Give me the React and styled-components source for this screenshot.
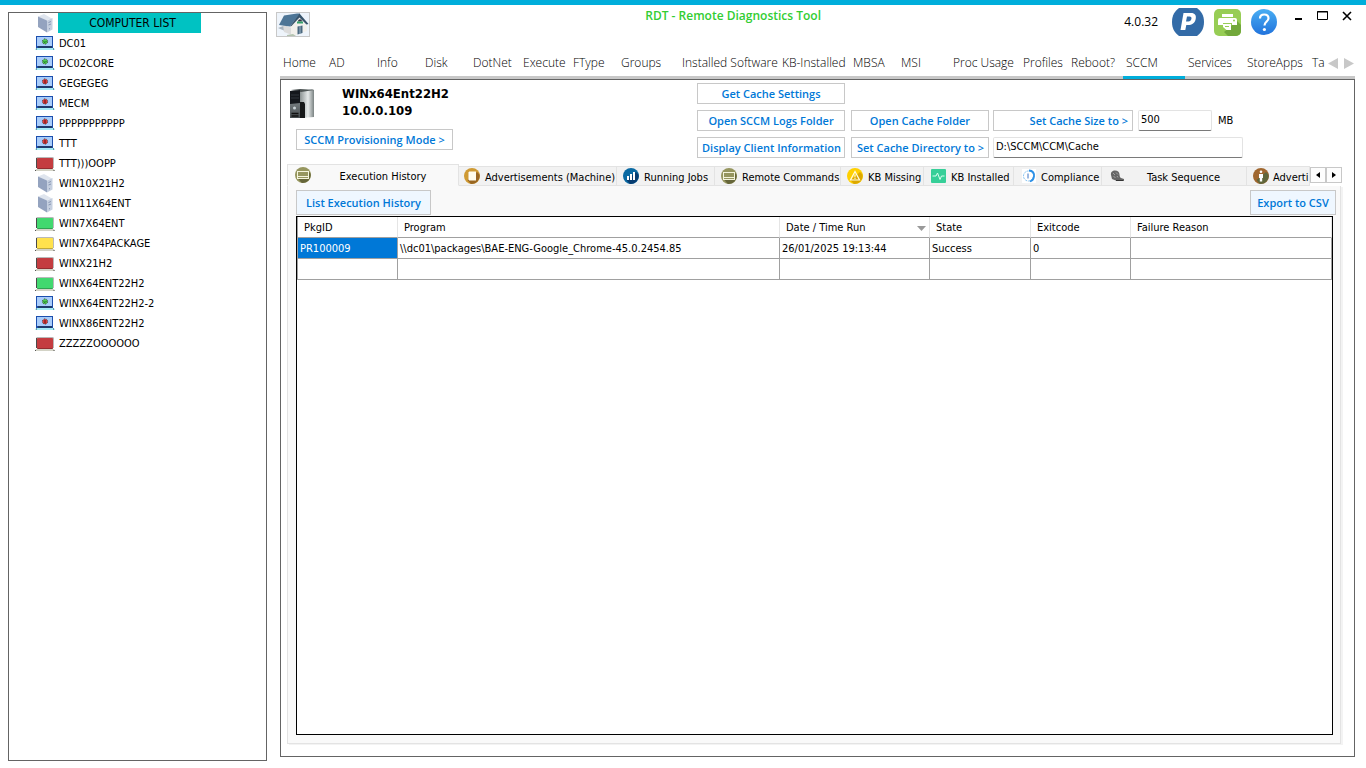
import React from "react";
import styled, { createGlobalStyle } from "styled-components";

const ui = '"DejaVu Sans Condensed", "Noto Sans", sans-serif';
const segoe = '"Open Sans", "Noto Sans", sans-serif';
const line = "#646464";
const accent = "#00aedb";

const GlobalStyle = createGlobalStyle`
  *, *::before, *::after { box-sizing: border-box; }
  html, body, #root { margin: 0; min-height: 100vh; }
  body { background: #fff; color: #000; font-family: ${ui}; font-size: 11px; }
  button, input { font-family: inherit; margin: 0; }
`;

const Window = styled.div`
  min-height: 100vh;
  display: flex;
  flex-direction: column;
  border-top: 5px solid ${accent};
`;

const Body = styled.div`
  flex: 1;
  display: flex;
  gap: 9px;
  padding: 0 11px 0 8px;
`;

const Sidebar = styled.aside`
  flex: 0 0 259px;
  margin: 7px 0;
  border: 1px solid ${line};
  padding-left: 26px;
`;

const SidebarHead = styled.div`
  display: flex;
  height: 20px;
  gap: 3px;
  padding-left: 1px;
`;

const SidebarTitle = styled.h2`
  margin: 0;
  width: 143px;
  padding-left: 6px;
  background: #00c2c2;
  font: 400 12px/20px ${ui};
  text-align: center;
`;

const List = styled.ul`
  list-style: none;
  margin: 0;
  padding: 0;
`;

const ListItem = styled.li`
  display: flex;
  align-items: center;
  gap: 4px;
  height: 20px;
  white-space: nowrap;
`;

const ListIcon = styled.span`
  flex: 0 0 20px;
  display: flex;
  justify-content: center;
`;

const Main = styled.main`
  flex: 1;
  min-width: 0;
  display: flex;
  flex-direction: column;
  padding-bottom: 11px;
`;

const Header = styled.header`
  display: flex;
  align-items: flex-start;
  height: 45px;
  padding-top: 3px;
`;

const HomeButton = styled.button`
  width: 34px;
  height: 25px;
  margin-top: 4px;
  padding: 0;
  border: 1px solid #c8c8c8;
  background: #eef4fb;
  display: grid;
  place-items: center;
`;

const Title = styled.h1`
  flex: 1;
  margin: 0;
  padding-left: 32px;
  text-align: center;
  color: #32cd32;
  font: 600 12px/16px ${segoe};
`;

const Tools = styled.div`
  display: flex;
  align-items: center;
  gap: 10px;
`;

const Version = styled.span`
  margin-right: 4px;
  font: 400 12px/28px ${segoe};
`;

const IconButton = styled.button`
  border: 0;
  background: none;
  padding: 0;
  display: block;
  height: ${(p) => p.$h || 28}px;
  svg { display: block; }
`;

const WindowControls = styled.div`
  display: flex;
  align-items: flex-start;
  gap: 14px;
  height: 28px;
  margin-left: 6px;
  padding-right: 3px;
`;

const Nav = styled.nav`
  display: flex;
  margin-left: 4px;
  height: 29px;
  border-bottom: 3px solid #c8c8c8;
`;

const NavTabs = styled.div`
  flex: 1;
  min-width: 0;
  display: flex;
  overflow: hidden;
  height: 29px;
  margin-right: 3px;
`;

const NavTab = styled.a`
  flex: 0 0 ${(p) => p.$w}px;
  height: 29px;
  padding: 1px 0 0 3px;
  border-bottom: 3px solid ${(p) => (p.$active ? accent : "#c8c8c8")};
  color: #000;
  font: 300 12px/24px ${segoe};
  text-decoration: none;
  white-space: nowrap;
`;

const NavArrows = styled.div`
  display: flex;
  align-items: center;
  gap: 6px;
  height: 26px;
  padding-right: 1px;
`;

const Panel = styled.section`
  flex: 1;
  display: flex;
  flex-direction: column;
  margin-left: 4px;
  border: 1px solid ${line};
  padding: 3px 12px 12px 6px;
`;

const Summary = styled.div`
  display: flex;
  height: 81px;
`;

const Machine = styled.div`
  flex: 0 0 410px;
  padding: 5px 0 0 2px;
`;

const MachineId = styled.div`
  display: flex;
  gap: 27px;
  height: 41px;
`;

const MachineName = styled.div`
  margin-top: -3px;
  font: 700 13px/17px ${ui};
`;

const Button = styled.button`
  height: ${(p) => p.$h || 21}px;
  width: ${(p) => (p.$w ? `${p.$w}px` : "auto")};
  padding: 0 4px;
  border: 1px solid #c8c8c8;
  background: ${(p) => (p.$tint ? "#eff7ff" : "#fff")};
  color: #0078d7;
  font: 600 11px/18px ${segoe};
  text-align: ${(p) => p.$align || "center"};
  white-space: nowrap;
`;

const Provisioning = styled(Button)`
  margin-left: 7px;
`;

const Actions = styled.div`
  display: grid;
  grid-template-columns: 148px 138px auto;
  grid-auto-rows: 21px;
  gap: 6px;
  align-content: start;
`;

const Pair = styled.div`
  display: flex;
  align-items: center;
  gap: 5px;
  margin-left: -2px;
`;

const TextBox = styled.input`
  width: ${(p) => p.$w}px;
  height: 21px;
  padding: 0 2px 2px;
  border: 1px solid #e3e3e3;
  border-bottom-color: #7a7a7a;
  border-radius: 2px;
  color: #000;
  font-size: 11px;
`;

const Unit = styled.label`
  margin-left: 1px;
`;

const TabStrip = styled.div`
  display: flex;
  align-items: flex-end;
  height: 22px;
`;

const TabClip = styled.div`
  flex: 1;
  min-width: 0;
  display: flex;
  align-items: flex-end;
  overflow: hidden;
`;

const Tab = styled.button`
  flex: 0 0 ${(p) => p.$w}px;
  display: flex;
  align-items: center;
  height: ${(p) => (p.$active ? 22 : 20)}px;
  padding: 0 0 0 ${(p) => p.$pad || 6}px;
  border: 1px solid #e3e3e3;
  border-left-width: ${(p) => (p.$active ? 1 : 0)}px;
  border-bottom-color: ${(p) => (p.$active ? "#f9f9f9" : "#e3e3e3")};
  background: ${(p) => (p.$active ? "#f9f9f9" : "#f2f2f2")};
  color: #000;
  font-size: 11px;
  white-space: nowrap;
  svg { flex: none; }
`;

const TabLabel = styled.span`
  flex: 1;
  margin-left: ${(p) => p.$gap || 5}px;
  padding: ${(p) => (p.$center ? "2px 8px 0 0" : "2px 0 0")};
  text-align: ${(p) => (p.$center ? "center" : "left")};
`;

const Spinner = styled.div`
  display: flex;
  height: 22px;
  padding-top: 3px;
`;

const SpinButton = styled.button`
  width: 16px;
  height: 16px;
  padding: 0;
  border: 1px solid #c8c8c8;
  background: #fdfdfd;
  display: grid;
  place-items: center;
`;

const TabPage = styled.div`
  flex: 1;
  display: flex;
  flex-direction: column;
  margin-right: 1px;
  padding: 4px 7px 8px 8px;
  border: 1px solid #e3e3e3;
  border-top: 0;
  background: #f9f9f9;
  box-shadow: 2px 1px 0 #f3f3f3;
`;

const PageBar = styled.div`
  display: flex;
  justify-content: space-between;
  height: 26px;
  margin-right: -3px;
`;

const Grid = styled.div`
  flex: 1;
  border: 1px solid #000;
  background: #fff;
`;

const Table = styled.table`
  width: 100%;
  table-layout: fixed;
  border-collapse: separate;
  border-spacing: 0;
  border-left: 1px solid #a0a0a0;
  font-size: 11px;
`;

const Th = styled.th`
  width: ${(p) => (p.$w ? `${p.$w}px` : "auto")};
  height: 21px;
  padding: 2px 0 0 6px;
  border-right: 1px solid #e5e5e5;
  border-bottom: 1px solid #a0a0a0;
  font-weight: 400;
  line-height: 14px;
  text-align: left;
`;

const ThInner = styled.div`
  display: flex;
  align-items: center;
  justify-content: space-between;
  padding-right: 3px;
`;

const Td = styled.td`
  height: 21px;
  padding: 2px 0 0 2px;
  border-right: 1px solid #a0a0a0;
  border-bottom: 1px solid #a0a0a0;
  background: ${(p) => (p.$selected ? "#0078d7" : "#fff")};
  color: ${(p) => (p.$selected ? "#fff" : "#000")};
  line-height: 14px;
  white-space: nowrap;
`;

/* Icons */

const ServerIcon = () => (
  <svg width="19" height="20" viewBox="0 0 19 20" aria-hidden="true">
    <path d="M2 3.500 8 1l8 4.500-6 2z" fill="#dfe5ee" />
    <path d="M2 3.500 11 7.500v12L2 14z" fill="#94a3bf" />
    <path d="M11 7.500 16.500 5v11.500L11 19.500z" fill="#c5cfdf" />
    <path d="M12.500 9.500l2.500-1M12.500 12l2.500-1M13 16l1-.5" stroke="#8796b3" strokeWidth="1" />
  </svg>
);

const LaptopIcon = ({ dot }) => (
  <svg width="20" height="14" viewBox="0 0 20 14" aria-hidden="true">
    <path d="M1 12h18l1 2H0z" fill="#a5ecf7" />
    <rect x="1" y="0" width="17" height="12" fill="#1c4fae" />
    <rect x="2" y="1" width="15" height="9" fill="#a9cdfb" />
    <rect x="3" y="10" width="14" height="2" fill="#203c6c" />
    <circle cx="10" cy="5.500" r="2.600" fill={dot} stroke="#3f4a4a" strokeWidth="1" strokeDasharray="1.500 1.200" />
    {dot === "#e33b3b" ? (
      <path d="M10 4v3.500" stroke="#5b1717" strokeWidth="1" />
    ) : (
      <path d="M8.500 5.500l1.500 1 1.500-1.500" stroke="#1e6b22" fill="none" strokeWidth="1" />
    )}
    <path d="M1 13h1M18 13h1" stroke="#345" />
  </svg>
);

const ScreenIcon = ({ fill }) => (
  <svg width="20" height="15" viewBox="0 0 20 15" aria-hidden="true">
    <path d="M2 1h16l1 1v10H1V2z" fill="#b9b9b9" />
    <rect x="2" y="2" width="16" height="11" rx="1" fill={fill} />
    <path d="M1.500 2v10" stroke="#4a4a4a" />
    <rect x="2" y="12" width="16" height="1" fill="#000" opacity=".25" />
    <path d="M1 13h18l1 2H0z" fill="#d3d3c6" />
    <path d="M0 14.500h1M18.500 14.500h1" stroke="#555" />
  </svg>
);

const icons = {
  ok: <LaptopIcon dot="#4fd052" />,
  bad: <LaptopIcon dot="#e33b3b" />,
  red: <ScreenIcon fill="#c43c40" />,
  green: <ScreenIcon fill="#42d86f" />,
  yellow: <ScreenIcon fill="#ffe24d" />,
  server: <ServerIcon />,
};

const HouseIcon = () => (
  <svg width="32" height="23" viewBox="0 0 32 23" aria-hidden="true">
    <path d="M1 15l8-3 6 9z" fill="#a9b4be" />
    <path d="M6 12l9 3v7L7 19z" fill="#dcdcdc" />
    <path d="M14 11l9-8 7 8v7l-14 5-2-1z" fill="#f2f0ec" />
    <path d="M2 12 7 2.500 20 .5h3L13 13.500z" fill="#4d7596" />
    <path d="M13 13.500 22.500 .5 31.500 11l-2 .5-7-7-8 8.500z" fill="#38546c" />
    <path d="M20.500 13.500l5-1v7.500l-5 1.500z" fill="#4a6880" />
    <path d="M23 13v8" stroke="#9db5c6" />
    <path d="M21 8.500c0-3 4-3 4 0z" fill="#334" />
    <path d="M20 9.500h6" stroke="#35a06b" strokeWidth="2" />
    <path d="M10 22l6-1 3 2h-9z" fill="#b4c3b0" />
  </svg>
);

const TowerIcon = () => (
  <svg width="26" height="32" viewBox="0 0 26 32" aria-hidden="true">
    <defs>
      <linearGradient id="side" x1="0" x2="1">
        <stop offset="0" stopColor="#7f8787" />
        <stop offset=".6" stopColor="#e6eaea" />
        <stop offset="1" stopColor="#7a8282" />
      </linearGradient>
      <linearGradient id="front" x1="0" x2="0" y1="0" y2="1">
        <stop offset="0" stopColor="#9ba3a6" />
        <stop offset="1" stopColor="#464c4f" />
      </linearGradient>
    </defs>
    <path d="M10 2 23 1l2 1v27l-13 1z" fill="url(#side)" />
    <path d="M2 2l9-1 14 1-13 2z" fill="#4d5454" />
    <path d="M1 3l10-1v28L1 30z" fill="url(#front)" />
    <path d="M1 3l10-1v13L1 16z" fill="#14171c" />
    <path d="M11 14h4l1 2v14h-5z" fill="#161819" />
    <path d="M2 10h8M2 7h8" stroke="#30363d" />
    <circle cx="5.500" cy="20" r="1.500" fill="#c9d2d6" />
    <path d="M2.500 25.500h7M2.500 28h7" stroke="#111" strokeWidth="1.500" />
  </svg>
);

const PaypalIcon = () => (
  <svg width="32" height="28" viewBox="0 0 32 28" aria-hidden="true">
    <path d="M7 0h18c4 3 7 7 7 14s-3 11-7 14H7C3 25 0 21 0 14S3 3 7 0z" fill="#336ba7" />
    <path
      fillRule="evenodd"
      d="M11.500 5h7.500c4 0 5.500 2.500 4.700 6-.8 4-3.700 6-7.700 6h-1.700l-1 5H8.500zM15 8.500l-1 5h2.500c1.500 0 2.500-1 2.900-2.500.4-1.600-.2-2.500-1.900-2.500z"
      fill="#fff"
    />
  </svg>
);

const PrinterIcon = () => (
  <svg width="27" height="27" viewBox="0 0 27 27" aria-hidden="true">
    <rect width="27" height="27" rx="5" fill="#97cd55" />
    <path d="M23 12l4 4v6a5 5 0 0 1-5 5h-8l-4-4 7-6z" fill="#72a83b" />
    <rect x="8" y="5" width="11" height="3" fill="#fff" />
    <path d="M6 9h15a2 2 0 0 1 2 2v5h-5v-2H9v2H4v-5a2 2 0 0 1 2-2z" fill="#fff" />
    <circle cx="20" cy="11.500" r="1" fill="#97cd55" />
    <path d="M9 15h8v6h-4.500L9 18z" fill="#fff" />
    <path d="M11 17.500h4" stroke="#97cd55" />
  </svg>
);

const HelpIcon = () => (
  <svg width="27" height="27" viewBox="0 0 27 27" aria-hidden="true">
    <defs>
      <linearGradient id="help" x1="0" x2="0" y1="0" y2="1">
        <stop offset="0" stopColor="#49aef3" />
        <stop offset="1" stopColor="#2273dc" />
      </linearGradient>
    </defs>
    <circle cx="13" cy="13" r="13" fill="url(#help)" />
    <path d="M9 9.500c0-2.500 1.700-4 4.200-4s4.300 1.400 4.300 3.700c0 3.300-4 3.300-4 7.300" fill="none" stroke="#fff" strokeWidth="2.200" />
    <circle cx="13.400" cy="20.500" r="1.600" fill="#fff" />
  </svg>
);

const Disc = ({ fill, shade, children }) => (
  <svg width="16" height="16" viewBox="0 0 16 16" aria-hidden="true">
    <circle cx="8" cy="8" r="8" fill={fill} />
    <path d="M13 4l2.500 2.500a8 8 0 0 1-9 9.300L3.500 12z" fill={shade} />
    {children}
  </svg>
);

const CardIcon = () => (
  <Disc fill="#96965f" shade="#66663a">
    <rect x="2.500" y="4.500" width="11" height="7" fill="#96965f" stroke="#f4f4dc" />
    <path d="M3 9.500h10" stroke="#f4f4dc" />
  </Disc>
);

const BookIcon = () => (
  <Disc fill="#cf9a33" shade="#996622">
    <rect x="5" y="3.500" width="7" height="9" fill="#fffbea" />
    <path d="M4 5h2M4 7h2M4 9h2M4 11h2" stroke="#fff" />
  </Disc>
);

const ChartIcon = () => (
  <Disc fill="#0a6aa3" shade="#063c70">
    <path d="M5 12V8M8 12V6M11 12V4" stroke="#fff" strokeWidth="2" />
  </Disc>
);

const WarnIcon = () => (
  <Disc fill="#ffd000" shade="#dca800">
    <path d="M8 3.500l4.500 8.500h-9z" fill="none" stroke="#fffbe0" strokeWidth="1.200" />
    <path d="M8 6.500v3M8 10v1" stroke="#fffbe0" />
  </Disc>
);

const PulseIcon = () => (
  <svg width="15" height="14" viewBox="0 0 15 14" aria-hidden="true">
    <rect width="15" height="14" rx="1" fill="#36cf98" />
    <path d="M1.500 7H5l1.500-3 2.500 6.500L10.500 7h3" fill="none" stroke="#d9fff0" />
  </svg>
);

const ClockIcon = () => (
  <svg width="14" height="14" viewBox="0 0 14 14" aria-hidden="true">
    <rect width="14" height="14" fill="#fff" />
    <circle cx="6.500" cy="7" r="5" fill="none" stroke="#79bdf0" strokeDasharray="2 1" />
    <path d="M7 1.500c4 0 5.500 3 5 6S9.500 12 8 12.500" fill="none" stroke="#2b8fe6" strokeWidth="1.800" />
    <path d="M6 4.500v5" stroke="#3a73c4" />
  </svg>
);

const ReelIcon = () => (
  <svg width="14" height="12" viewBox="0 0 14 12" aria-hidden="true">
    <path d="M1 5c-.5-3 1.500-4.500 4-4.500s4.500 1.500 4.500 4c0 1.500.5 3 1.500 3.500l3 1v2H7L2 9z" fill="#666" />
    <path d="M3 3l2 2M6 2.500l2 2M3.500 6.500l2 1M7 6l1 1.500" stroke="#a2a2a2" />
    <path d="M6 10.500h7" stroke="#333" />
  </svg>
);

const PersonIcon = () => (
  <Disc fill="#a0672f" shade="#60663a">
    <circle cx="8" cy="3.800" r="1.300" fill="#fff" />
    <path d="M6 6h4v4H9.200v3.500H6.800V10H6z" fill="#fff" />
  </Disc>
);

const Triangle = ({ w, h, dir, fill }) => (
  <svg width={w} height={h} viewBox="0 0 10 10" preserveAspectRatio="none" aria-hidden="true">
    <path d={{ left: "M10 0v10L0 5z", right: "M0 0v10l10-5z", down: "M0 0h10L5 10z" }[dir]} fill={fill} />
  </svg>
);

/* Data */

const computers = [
  ["DC01", "ok"], ["DC02CORE", "ok"], ["GEGEGEG", "bad"], ["MECM", "bad"],
  ["PPPPPPPPPPP", "bad"], ["TTT", "bad"], ["TTT)))OOPP", "red"], ["WIN10X21H2", "server"],
  ["WIN11X64ENT", "server"], ["WIN7X64ENT", "green"], ["WIN7X64PACKAGE", "yellow"],
  ["WINX21H2", "red"], ["WINX64ENT22H2", "green"], ["WINX64ENT22H2-2", "ok"],
  ["WINX86ENT22H2", "bad"], ["ZZZZZOOOOOO", "red"],
];

const navTabs = [
  ["Home", 46], ["AD", 48], ["Info", 48], ["Disk", 48], ["DotNet", 50], ["Execute", 50],
  ["FType", 48], ["Groups", 61], ["Installed Software", 100], ["KB-Installed", 71],
  ["MBSA", 48], ["MSI", 52], ["Proc Usage", 70], ["Profiles", 48], ["Reboot?", 55],
  ["SCCM", 62], ["Services", 59], ["StoreApps", 65], ["Ta", 16],
];

const tabs = [
  { label: "Execution History", w: 172, icon: <CardIcon />, active: true, center: true, pad: 7 },
  { label: "Advertisements (Machine)", w: 158, icon: <BookIcon />, pad: 5 },
  { label: "Running Jobs", w: 98, icon: <ChartIcon /> },
  { label: "Remote Commands", w: 126, icon: <CardIcon /> },
  { label: "KB Missing", w: 83, icon: <WarnIcon /> },
  { label: "KB Installed", w: 90, icon: <PulseIcon />, pad: 7 },
  { label: "Compliance", w: 88, icon: <ClockIcon />, pad: 8 },
  { label: "Task Sequence", w: 145, icon: <ReelIcon />, pad: 8, center: true },
  { label: "Adverti", w: 63, icon: <PersonIcon />, gap: 4 },
];

const columns = [
  ["PkgID", 100], ["Program", 382], ["Date / Time Run", 150],
  ["State", 101], ["Exitcode", 100], ["Failure Reason"],
];

const rows = [
  ["PR100009", "\\\\dc01\\packages\\BAE-ENG-Google_Chrome-45.0.2454.85", "26/01/2025 19:13:44", "Success", "0", ""],
  ["", "", "", "", "", ""],
];

export default function App() {
  return (
    <>
      <GlobalStyle />
      <Window>
        <Body>
          <Sidebar>
            <SidebarHead>
              <ServerIcon />
              <SidebarTitle>COMPUTER LIST</SidebarTitle>
            </SidebarHead>
            <List>
              {computers.map(([name, kind]) => (
                <ListItem key={name}>
                  <ListIcon>{icons[kind]}</ListIcon>
                  {name}
                </ListItem>
              ))}
            </List>
          </Sidebar>

          <Main>
            <Header>
              <HomeButton aria-label="Home"><HouseIcon /></HomeButton>
              <Title>RDT - Remote Diagnostics Tool</Title>
              <Tools>
                <Version>4.0.32</Version>
                <IconButton aria-label="Donate"><PaypalIcon /></IconButton>
                <IconButton aria-label="Print"><PrinterIcon /></IconButton>
                <IconButton aria-label="Help"><HelpIcon /></IconButton>
                <WindowControls>
                  <IconButton aria-label="Minimize">
                    <svg width="9" height="28" aria-hidden="true"><path d="M1 11h7" stroke="#000" strokeWidth="2" /></svg>
                  </IconButton>
                  <IconButton aria-label="Maximize">
                    <svg width="11" height="28" aria-hidden="true"><path d="M.5 3.500h10v8H.5zM0 4h11" fill="none" stroke="#000" /></svg>
                  </IconButton>
                  <IconButton aria-label="Close">
                    <svg width="10" height="28" aria-hidden="true"><path d="M1 4l8 8M9 4l-8 8" stroke="#000" strokeWidth="1.600" /></svg>
                  </IconButton>
                </WindowControls>
              </Tools>
            </Header>

            <Nav>
              <NavTabs>
                {navTabs.map(([label, w]) => (
                  <NavTab key={label} href="#" $w={w} $active={label === "SCCM"}>{label}</NavTab>
                ))}
              </NavTabs>
              <NavArrows>
                <IconButton $h={11} aria-label="Scroll left"><Triangle w={10} h={11} dir="left" fill="#c8c8c8" /></IconButton>
                <IconButton $h={11} aria-label="Scroll right"><Triangle w={10} h={11} dir="right" fill="#c8c8c8" /></IconButton>
              </NavArrows>
            </Nav>

            <Panel>
              <Summary>
                <Machine>
                  <MachineId>
                    <TowerIcon />
                    <MachineName>WINx64Ent22H2<br />10.0.0.109</MachineName>
                  </MachineId>
                  <Provisioning $w={157}>SCCM Provisioning Mode &gt;</Provisioning>
                </Machine>
                <Actions>
                  <Button>Get Cache Settings</Button>
                  <span />
                  <span />
                  <Button>Open SCCM Logs Folder</Button>
                  <Button>Open Cache Folder</Button>
                  <Pair>
                    <Button $w={140} $align="right">Set Cache Size to &gt;</Button>
                    <TextBox id="size" $w={74} defaultValue="500" />
                    <Unit htmlFor="size">MB</Unit>
                  </Pair>
                  <Button>Display Client Information</Button>
                  <Button $align="right">Set Cache Directory to &gt;</Button>
                  <Pair>
                    <TextBox $w={250} aria-label="Cache directory" defaultValue="D:\SCCM\CCM\Cache" />
                  </Pair>
                </Actions>
              </Summary>

              <TabStrip>
                <TabClip>
                  {tabs.map((t) => (
                    <Tab key={t.label} $w={t.w} $active={t.active} $pad={t.pad}>
                      {t.icon}
                      <TabLabel $center={t.center} $gap={t.gap}>{t.label}</TabLabel>
                    </Tab>
                  ))}
                </TabClip>
                <Spinner>
                  <SpinButton aria-label="Previous tabs"><Triangle w={4} h={6} dir="left" fill="#000" /></SpinButton>
                  <SpinButton aria-label="Next tabs"><Triangle w={4} h={6} dir="right" fill="#000" /></SpinButton>
                </Spinner>
              </TabStrip>

              <TabPage>
                <PageBar>
                  <Button $h={25} $w={135} $tint>List Execution History</Button>
                  <Button $h={25} $w={86} $tint>Export to CSV</Button>
                </PageBar>
                <Grid>
                  <Table>
                    <thead>
                      <tr>
                        {columns.map(([label, w]) => (
                          <Th key={label} $w={w}>
                            <ThInner>
                              {label}
                              {label === "Date / Time Run" && <Triangle w={9} h={5} dir="down" fill="#999" />}
                            </ThInner>
                          </Th>
                        ))}
                      </tr>
                    </thead>
                    <tbody>
                      {rows.map((row, r) => (
                        <tr key={r}>
                          {row.map((cell, c) => (
                            <Td key={c} $selected={r === 0 && c === 0}>{cell}</Td>
                          ))}
                        </tr>
                      ))}
                    </tbody>
                  </Table>
                </Grid>
              </TabPage>
            </Panel>
          </Main>
        </Body>
      </Window>
    </>
  );
}
